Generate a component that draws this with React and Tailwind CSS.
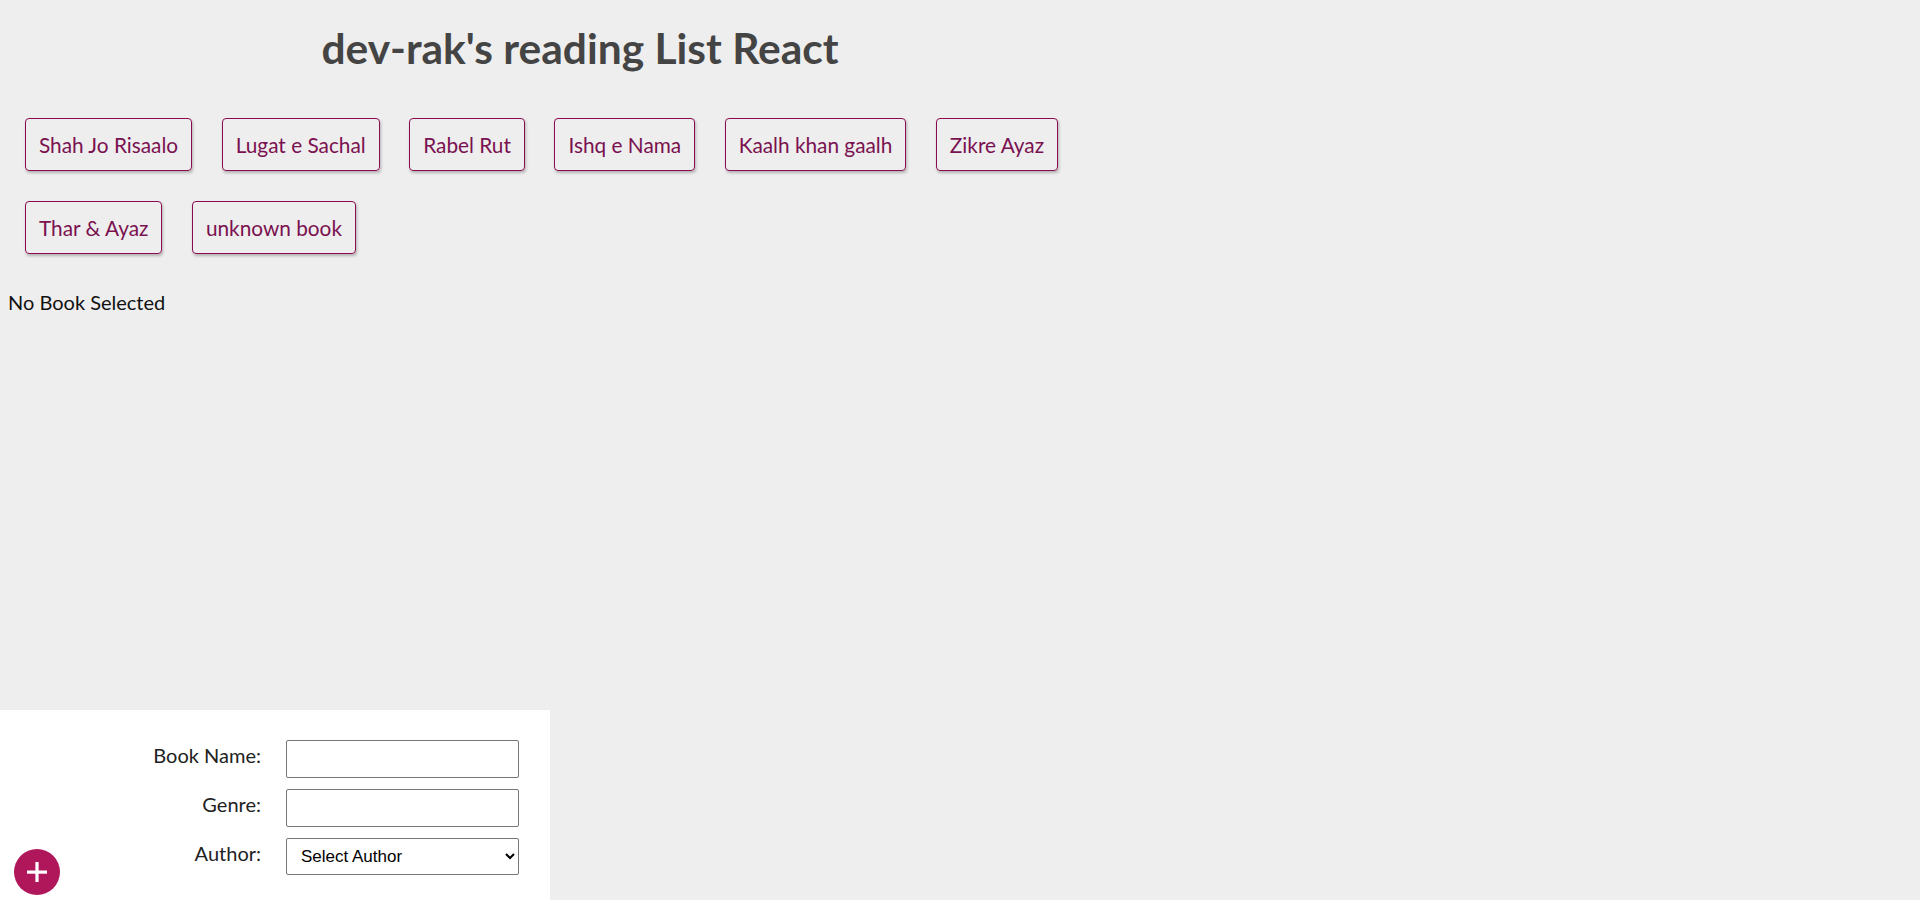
import React from "react";

const books = [
  "Shah Jo Risaalo",
  "Lugat e Sachal",
  "Rabel Rut",
  "Ishq e Nama",
  "Kaalh khan gaalh",
  "Zikre Ayaz",
  "Thar & Ayaz",
  "unknown book",
];

export default function App() {
  return (
    <div className="flex h-[900px] flex-col overflow-hidden bg-[#eeeeee] font-['Lato',sans-serif] text-[20px]">
      <div className="w-[1152px] pl-[8px]">
        <h1 className="mt-[20px] text-center text-[42.5px] font-bold leading-[1.3] text-[#444444]">
          dev-rak's reading List React
        </h1>
        <ul className="mt-[43px] flex flex-wrap gap-x-[29.5px] gap-y-[30px] pl-[17px]">
          {books.map((b) => (
            <li key={b}>
              <button className="rounded-[4px] border border-[#8a0b4e] px-[13px] py-[11.5px] text-[20.8px] leading-[1.35] text-[#7a1150] shadow-[1px_2px_3px_rgba(0,0,0,0.25)]">
                {b}
              </button>
            </li>
          ))}
        </ul>
        <p className="mt-[34px] leading-[1.4] text-[#111111]">No Book Selected</p>
      </div>

      <div className="relative mt-auto h-[190px] w-[550px] bg-white pt-[30px]">
        <form className="grid grid-cols-[261px_233px] gap-x-[25px] gap-y-[11px]">
          <label className="pt-[3px] text-right leading-[1.2] text-[#222222]">Book Name:</label>
          <input type="text" className="h-[38px] rounded-[2px] border border-[#767676] bg-white px-2" />
          <label className="pt-[3px] text-right leading-[1.2] text-[#222222]">Genre:</label>
          <input type="text" className="h-[38px] rounded-[2px] border border-[#767676] bg-white px-2" />
          <label className="pt-[3px] text-right leading-[1.2] text-[#222222]">Author:</label>
          <select className="h-[37px] rounded-[2px] border border-[#767676] bg-white pl-[10px] pr-[6px] font-['Liberation_Sans',Arial,sans-serif] text-[17px] text-black">
            <option>Select Author</option>
          </select>
        </form>
        <button
          type="button"
          className="absolute left-[14px] top-[139px] flex h-[46px] w-[46px] items-center justify-center rounded-full bg-[#b0175a]"
        >
          <svg width="22" height="22" viewBox="0 0 22 22">
            <rect x="1" y="9.5" width="20" height="3.2" fill="white" />
            <rect x="9.4" y="1" width="3.2" height="20" fill="white" />
          </svg>
        </button>
      </div>
    </div>
  );
}
